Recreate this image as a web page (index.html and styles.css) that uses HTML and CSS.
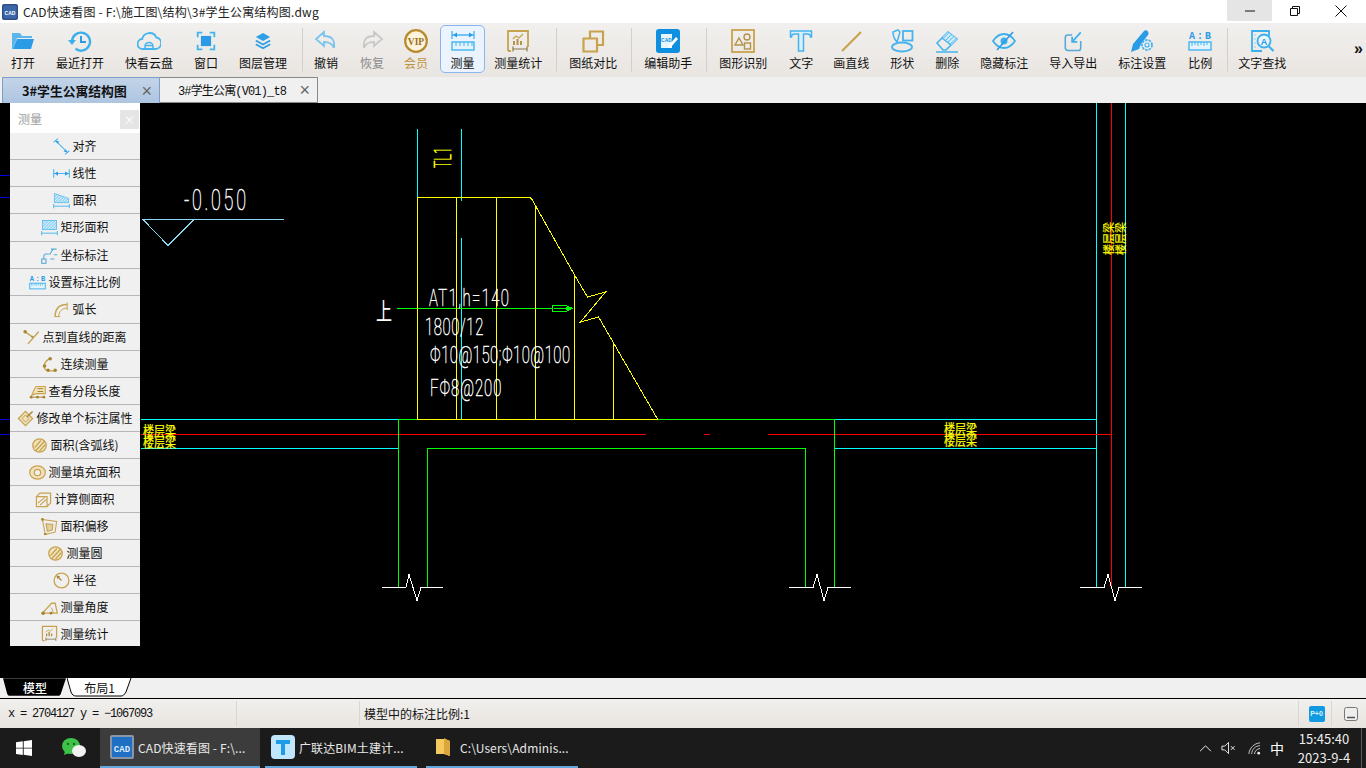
FILE: index.html
```html
<!DOCTYPE html>
<html lang="zh">
<head>
<meta charset="utf-8">
<title>CAD快速看图</title>
<link rel="stylesheet" href="styles.css">
</head>
<body>
<svg class="defs" aria-hidden="true">
  <defs>
    <pattern id="hatch-blue" width="3" height="3" patternUnits="userSpaceOnUse" patternTransform="rotate(45)">
      <rect width="3" height="3" fill="#d6effb"/><path d="M0 0v3" stroke="#45b4ee" stroke-width="1.600"/>
    </pattern>
  </defs>
  <symbol id="i-ruler" viewBox="0 0 24 24">
    <rect x="1" y="13" width="22" height="8" fill="#e4f4fd" stroke="#45b4ee" stroke-width="1.400"/>
    <path d="M4 13v4M7 13v3M10 13v4M13 13v3M16 13v4M19 13v3" stroke="#45b4ee" fill="none"/>
  </symbol>
  <symbol id="i-stat" viewBox="0 0 24 24">
    <path d="M2 22V2h20v16M2 22h3" fill="none" stroke="#c8a24e" stroke-width="1.800"/>
    <path d="M7 20h14M7 17.500v5M21 17.500v5" fill="none" stroke="#8a7a50" stroke-width="1.200"/>
    <path d="M7 10l3-3 3 2 4-4" fill="none" stroke="#c8a24e" stroke-width="1.300"/>
    <path d="M7 12h2v4H7zM10.500 10h2v6h-2zM14 12h2v4h-2z" fill="#b4924a"/>
  </symbol>
  <symbol id="i-hatch" viewBox="0 0 24 24">
    <circle cx="12" cy="12" r="9.500" fill="#f0e2bd" stroke="#c8a24e" stroke-width="1.800"/>
    <path d="M5 15l9-10M7 19l12-13M12 20l8-9" stroke="#c8a24e" stroke-width="1.800" fill="none"/>
  </symbol>
</svg>

<header class="titlebar">
  <svg class="app-mini" viewBox="0 0 16 16"><rect width="16" height="16" rx="2" fill="#2f4f86"/><rect x="1.500" y="1.500" width="13" height="13" fill="#3b66a8"/><text x="8" y="10.500" text-anchor="middle" class="mini-text">CAD</text></svg>
  <span class="title-text">CAD快速看图 - F:\施工图\结构\3#学生公寓结构图.dwg</span>
  <div class="winctl">
    <span class="winbtn is-hover"><svg viewBox="0 0 12 12"><path d="M1 6h10" stroke="#111"/></svg></span>
    <span class="winbtn"><svg viewBox="0 0 12 12"><path d="M1.500 3.500h7v7h-7zM3.500 3.500v-2h7v7h-2" fill="none" stroke="#111"/></svg></span>
    <span class="winbtn"><svg viewBox="0 0 12 12"><path d="M.5.500l11 11M11.500.500l-11 11" stroke="#111"/></svg></span>
  </div>
</header>

<nav class="toolbar">
  <div class="tool"><svg class="ico" viewBox="0 0 24 24"><path d="M1 4h8l2 3h10v2H6L2 20H1z" fill="#5cb6ee"/><path d="M6 10h17l-3 10H2z" fill="#2a9be6"/></svg><span>打开</span></div>
  <div class="tool"><svg class="ico" viewBox="0 0 24 24"><path d="M4 12.500A9 9 0 1 1 7.500 19.800" fill="none" stroke="#3cb0ee" stroke-width="2.400"/><path d="M0 11h8l-4 5z" fill="#3cb0ee"/><path d="M13 7v6h5" fill="none" stroke="#2a9be6" stroke-width="2"/></svg><span>最近打开</span></div>
  <div class="tool"><svg class="ico" viewBox="0 0 24 24"><path d="M6 20a5 5 0 0 1-.8-10 7.500 7.500 0 0 1 14.200-1.500 5.800 5.800 0 0 1-.8 11.500z" fill="none" stroke="#45b4ee" stroke-width="1.800"/><path d="M8 20v-3a4 3.500 0 0 1 8 0v3M8 16.500h8" fill="none" stroke="#45b4ee" stroke-width="1.500"/></svg><span>快看云盘</span></div>
  <div class="tool"><svg class="ico" viewBox="-1 -1 26 26"><path d="M3 8V3h5M16 3h5v5M21 16v5h-5M8 21H3v-5" fill="none" stroke="#45b4ee" stroke-width="2"/><rect x="6.500" y="6.500" width="11" height="11" fill="#2a9be6"/></svg><span>窗口</span></div>
  <div class="tool"><svg class="ico" viewBox="-3 -3 30 30"><path d="M12 2l9 5-9 5-9-5z" fill="#2f9fe6"/><path d="M3 11.500l9 5 9-5M3 16l9 5 9-5" fill="none" stroke="#2f9fe6" stroke-width="2.200"/></svg><span>图层管理</span></div>
  <i class="sep"></i>
  <div class="tool"><svg class="ico" viewBox="0 0 24 24"><path d="M10 3L2 10l8 7v-4c5 0 8 1 10 6 1-8-2-12-10-12z" fill="none" stroke="#7cc4ee" stroke-width="1.800"/></svg><span>撤销</span></div>
  <div class="tool tool-far"><svg class="ico" viewBox="0 0 24 24"><path d="M14 3l8 7-8 7v-4c-5 0-8 1-10 6-1-8 2-12 10-12z" fill="none" stroke="#c8c8c8" stroke-width="1.800"/></svg><span class="muted">恢复</span></div>
  <div class="tool"><svg class="ico" viewBox="0 0 24 24"><circle cx="12" cy="12" r="10.800" fill="#fbf3dc" stroke="#b98a2e" stroke-width="2.200"/><text x="12" y="15.500" text-anchor="middle" class="vip-text">VIP</text></svg><span class="gold">会员</span></div>
  <div class="tool is-active"><svg class="ico" viewBox="0 0 24 24"><path d="M1 2v8M23 2v8M1 6h22" fill="none" stroke="#45b4ee" stroke-width="1.300"/><path d="M2 6l4-2.500v5zM22 6l-4-2.500v5z" fill="#2a9be6"/><rect x="1" y="13" width="22" height="8" fill="#e4f4fd" stroke="#45b4ee" stroke-width="1.400"/><path d="M5 13v4M9 13v4M13 13v4M17 13v4M21 13v4" stroke="#45b4ee" fill="none"/></svg><span>测量</span></div>
  <div class="tool"><svg class="ico"><use href="#i-stat"/></svg><span>测量统计</span></div>
  <i class="sep sep-b"></i>
  <div class="tool"><svg class="ico" viewBox="0 0 24 24"><path d="M2.500 9.500h13.500v13H2.500zM9 9.500V2.500h13v13.500h-6" fill="none" stroke="#c8a24e" stroke-width="2.200"/></svg><span>图纸对比</span></div>
  <i class="sep sep-b"></i>
  <div class="tool"><svg class="ico" viewBox="0 0 24 24"><rect width="24" height="24" rx="3" fill="#0f8fe0"/><path d="M5 5h11v14H5z" fill="#e8f5fd"/><text x="10.500" y="13" text-anchor="middle" class="edit-text">CAD</text><path d="M13 16l7-8 2 2-7 8-3 1z" fill="#fff"/></svg><span>编辑助手</span></div>
  <i class="sep sep-b"></i>
  <div class="tool"><svg class="ico" viewBox="0 0 24 24"><rect x="1" y="1" width="22" height="22" fill="none" stroke="#c8a24e" stroke-width="1.800"/><path d="M4 16h8l-4-7z" fill="none" stroke="#b4924a" stroke-width="1.400"/><circle cx="16" cy="8" r="3" fill="none" stroke="#b4924a" stroke-width="1.400"/><rect x="13.500" y="14" width="6" height="6" fill="none" stroke="#b4924a" stroke-width="1.400"/></svg><span>图形识别</span></div>
  <div class="tool tool-far"><svg class="ico" viewBox="0 0 24 24"><path d="M1.500 2h21v6h-1c0-2-1-3-3-3h-4v17h-5V5H5.500C3.500 5 2.500 6 2.500 8h-1z" fill="#d9f0fc" stroke="#45b4ee" stroke-width="1.500"/></svg><span>文字</span></div>
  <div class="tool"><svg class="ico" viewBox="0 0 24 24"><path d="M3 22L22 3" fill="none" stroke="#c8a24e" stroke-width="2.200"/></svg><span>画直线</span></div>
  <div class="tool"><svg class="ico" viewBox="0 0 24 24"><ellipse cx="12" cy="18" rx="10" ry="4.500" fill="none" stroke="#45b4ee" stroke-width="1.800"/><rect x="13" y="2" width="9.500" height="9.500" fill="none" stroke="#45b4ee" stroke-width="1.800"/><path d="M3 3c0 4 1 7 4 10l3-10-2-2z" fill="none" stroke="#45b4ee" stroke-width="1.500"/></svg><span>形状</span></div>
  <div class="tool"><svg class="ico" viewBox="0 0 24 24"><path d="M2 14L13 3l9 7-11 11H8z" fill="none" stroke="#45b4ee" stroke-width="1.600"/><path d="M13 3l9 7-6 6-8-8z" fill="url(#hatch-blue)"/><path d="M7 9l9 7M1 23h22" fill="none" stroke="#45b4ee" stroke-width="1.500"/></svg><span>删除</span></div>
  <div class="tool"><svg class="ico" viewBox="0 0 24 24"><path d="M1 12C5 6 9 5 12 5s7 1 11 7c-4 6-8 7-11 7S5 18 1 12z" fill="none" stroke="#3cb0ee" stroke-width="1.800"/><circle cx="12" cy="12" r="3.500" fill="#3cb0ee"/><path d="M5 21L21 3" stroke="#2a9be6" stroke-width="1.500" fill="none"/></svg><span>隐藏标注</span></div>
  <div class="tool"><svg class="ico" viewBox="-2 -2 28 28"><path d="M11 5H6C4 5 3 6 3 8v12c0 2 1 3 3 3h13c1 0 2-1 2-3v-8" fill="none" stroke="#55a9d8" stroke-width="1.800"/><path d="M21 2L11 13M11 7v6h6" fill="none" stroke="#3cb0ee" stroke-width="2"/></svg><span>导入导出</span></div>
  <div class="tool"><svg class="ico" viewBox="0 0 24 24"><path d="M1 23l2-8L14 2c2-2 6 1 4 4L11 15l-2 5z" fill="#2a9be6"/><circle cx="17" cy="16" r="5" fill="#eee" stroke="#45b4ee" stroke-width="1.800" stroke-dasharray="2.500 1"/><circle cx="17" cy="16" r="2" fill="none" stroke="#45b4ee" stroke-width="1.200"/></svg><span>标注设置</span></div>
  <div class="tool tool-shift"><svg class="ico" viewBox="0 0 24 24"><text x="1" y="9.500" textLength="22" class="ab-text">A:B</text><use href="#i-ruler"/></svg><span>比例</span></div>
  <i class="sep sep-c"></i>
  <div class="tool"><svg class="ico" viewBox="0 0 24 24"><path d="M19 7V2H2v20h10" fill="none" stroke="#3cb0ee" stroke-width="1.800"/><path d="M4.500 6h1M4.500 10h1M4.500 14h1M4.500 18h1" stroke="#3cb0ee" fill="none"/><circle cx="14" cy="12" r="6.500" fill="#e9f6fd" stroke="#3cb0ee" stroke-width="1.800"/><text x="14" y="15.500" text-anchor="middle" class="find-text">A</text><path d="M18.500 17l5 5" stroke="#3cb0ee" stroke-width="2" fill="none"/></svg><span>文字查找</span></div>
  <b class="more">»</b>
</nav>

<div class="tabs">
  <div class="tab is-current"><b>3#学生公寓结构图</b><span class="x">×</span></div>
  <div class="tab is-other"><span class="mono">3#学生公寓(V01)_t8</span><span class="x">×</span></div>
</div>

<main class="canvas">
  <svg class="drawing" viewBox="0 103 1366 575" width="1366" height="575">
    <g class="lines" fill="none">
      <path stroke="#0000e0" d="M0 175.500h10M0 197.500h10M0 419.500h10M0 434.500h10"/>
      <path stroke="#00ffff" d="M417.500 129v68M461.500 129v72M461.500 238v181M141 419.500h257M141 448.500h257M834 419.500h262M834 448.500h262M1096.500 103v484M1125.500 103v484"/>
      <path stroke="#ff0000" d="M1111.500 103v484M141 434.500h505M640 434.500h6M704 434.500h6M768 434.500h343"/>
      <path stroke="#00ff00" d="M398 419.500h19M658 419.500h176M398.500 419v168M427.500 448v139M427 448.500h379M805.500 448v139M834.500 419v168M397 308.500h155"/>
      <path stroke="#00ff00" d="M552 305.500h14l6 3-6 3h-14zM554 308.500h18M566 307.500h6M566 309.500h4"/>
      <path stroke="#ffff00" d="M417 197.500h113l2 2 42.500 75.500 13 22 18-5-25 30 18-5 59 102H417.500V197.500M456.500 197v222M496.500 197v222M535.500 206v213M574.500 275v144M613.500 342v77"/>
      <path stroke="#88d8f0" d="M142 219.500h142M143 219.500l25 26 26-26"/>
      <path stroke="#ffffff" d="M382 587.500h24l3-13 8 26 4-13h22M789 587.500h24l4-13 7 26 4-13h23M1080 587.500h24l4-13 7 26 4-13h23"/>
    </g>
    <text class="shx" transform="translate(184 210) scale(.62 1)" textLength="100">-0.050</text>
    <text class="shx shx-s" transform="translate(429 306) scale(.62 1)" textLength="129">AT1,h=140</text>
    <text class="shx shx-s" transform="translate(425 335) scale(.62 1)" textLength="94">1800/12</text>
    <text class="shx shx-s" transform="translate(430 363) scale(.62 1)" textLength="226">Φ10@150;Φ10@100</text>
    <text class="shx shx-s" transform="translate(430 396) scale(.62 1)" textLength="115">FΦ8@200</text>
    <text class="shx-up" x="376" y="320" textLength="16" lengthAdjust="spacingAndGlyphs">上</text>
    <text class="shx-y" transform="translate(451 168) rotate(-90)" textLength="21" lengthAdjust="spacingAndGlyphs">TL1</text>
    <text class="beam" transform="translate(143 435.500) scale(1 1.200)">楼层梁</text>
    <text class="beam" transform="translate(143 447) scale(1 1.200)">楼层梁</text>
    <text class="beam" transform="translate(944 433.500) scale(1 1.200)">楼层梁</text>
    <text class="beam" transform="translate(944 445) scale(1 1.200)">楼层梁</text>
    <text class="beam" transform="translate(1113 255) rotate(-90)">楼层梁</text>
    <text class="beam" transform="translate(1125 255) rotate(-90)">楼层梁</text>
  </svg>

  <aside class="panel">
    <div class="panel-head"><span>测量</span><i class="panel-x">×</i></div>
    <div class="panel-rows">
      <div class="row"><svg class="pi" viewBox="0 0 24 24"><path d="M1 6l6-5M17 23l6-5M4 4l16 16" fill="none" stroke="#45b4ee" stroke-width="1.500"/><path d="M4 4l5 1-3 3zM20 20l-5-1 3-3z" fill="#2a9be6"/></svg><span>对齐</span></div>
      <div class="row"><svg class="pi" viewBox="0 0 24 24"><path d="M1 6v12M23 6v12M1 12h22" fill="none" stroke="#45b4ee" stroke-width="1.500"/><path d="M2 12l5-3v6zM22 12l-5-3v6z" fill="#2a9be6"/></svg><span>线性</span></div>
      <div class="row"><svg class="pi" viewBox="0 0 24 24"><path d="M2 2l20 7v6H2z" fill="url(#hatch-blue)" stroke="#45b4ee"/><path d="M1 17v6M23 17v6M1 20h22" fill="none" stroke="#45b4ee" stroke-width="1.300"/></svg><span>面积</span></div>
      <div class="row is-tall"><svg class="pi" viewBox="0 0 24 24"><rect x="2" y="2" width="20" height="13" fill="url(#hatch-blue)" stroke="#45b4ee"/><path d="M1 17v6M23 17v6M1 20h22" fill="none" stroke="#45b4ee" stroke-width="1.300"/></svg><span>矩形面积</span></div>
      <div class="row"><svg class="pi" viewBox="0 0 24 24"><rect x="1" y="17" width="6" height="6" fill="none" stroke="#55a9d8" stroke-width="1.500"/><path d="M4 17v-4c0-2 1-3 3-3h4M12 11l5-8M14 3h8M18 11h5M13 17h6" fill="none" stroke="#55a9d8" stroke-width="1.500"/></svg><span>坐标标注</span></div>
      <div class="row"><svg class="pi" viewBox="0 0 24 24"><text x="1" y="9.500" textLength="22" class="ab-text">A:B</text><use href="#i-ruler"/></svg><span>设置标注比例</span></div>
      <div class="row is-tall"><svg class="pi" viewBox="0 0 24 24"><path d="M3 22c0-11 6-17 17-17" fill="none" stroke="#c8a24e" stroke-width="2"/><path d="M8 22c0-7 5-12 12-12M20 2v11M2 22h8" fill="none" stroke="#c8a24e" stroke-width="1.400"/></svg><span>弧长</span></div>
      <div class="row"><svg class="pi" viewBox="0 0 24 24"><path d="M7 21L22 4M3 4l10 7" fill="none" stroke="#c8a24e" stroke-width="2"/><circle cx="3" cy="4" r="2.500" fill="#a9842f"/><circle cx="13" cy="11" r="1.500" fill="#a9842f"/></svg><span>点到直线的距离</span></div>
      <div class="row"><svg class="pi" viewBox="0 0 24 24"><path d="M13 3C5 8 3 14 6 19c1 2 5 2 14 2" fill="none" stroke="#c8a24e" stroke-width="1.800"/><circle cx="13" cy="4" r="2.500" fill="#a9842f"/><circle cx="5" cy="14" r="2.500" fill="#a9842f"/><circle cx="10" cy="20" r="2.500" fill="#a9842f"/><circle cx="20" cy="20" r="2.500" fill="#a9842f"/></svg><span>连续测量</span></div>
      <div class="row"><svg class="pi" viewBox="0 0 24 24"><path d="M10 5h13v10H10l-6 2 3-7z" fill="#f0e2bd" stroke="#c8a24e" stroke-width="1.500"/><path d="M12 8h8M12 12h8M3 20h18" fill="none" stroke="#a9842f" stroke-width="1.400"/><circle cx="3" cy="20" r="2" fill="#a9842f"/><circle cx="12" cy="20" r="2" fill="#a9842f"/><circle cx="21" cy="20" r="2" fill="#a9842f"/></svg><span>查看分段长度</span></div>
      <div class="row"><svg class="pi" viewBox="0 0 24 24"><path d="M2 12l10-10 10 10-10 10z" fill="#f0e2bd" stroke="#c8a24e" stroke-width="1.800"/><path d="M7 12l5-5 5 5-5 5z" fill="none" stroke="#a9842f"/><path d="M14 10l8-8" stroke="#a9842f" stroke-width="2" fill="none"/></svg><span>修改单个标注属性</span></div>
      <div class="row"><svg class="pi"><use href="#i-hatch"/></svg><span>面积(含弧线)</span></div>
      <div class="row"><svg class="pi" viewBox="0 0 24 24"><ellipse cx="12" cy="12" rx="11" ry="9.500" fill="#f0e2bd" stroke="#c8a24e" stroke-width="1.800"/><circle cx="12" cy="12" r="4.500" fill="#f0f0f0" stroke="#c8a24e" stroke-width="1.800"/></svg><span>测量填充面积</span></div>
      <div class="row"><svg class="pi" viewBox="0 0 24 24"><path d="M2 8h15v14H2zM2 8l5-5h15v14l-5 5" fill="none" stroke="#c8a24e" stroke-width="1.700"/><path d="M4 17l10-8M7 20l9-8" stroke="#c8a24e" stroke-width="1.500" fill="none"/></svg><span>计算侧面积</span></div>
      <div class="row"><svg class="pi" viewBox="0 0 24 24"><path d="M2 2l20 3-2 15-14 3z" fill="none" stroke="#c8a24e" stroke-width="1.500"/><path d="M7 8l10 1-1 8-7 2z" fill="#e4cf97" stroke="#a9842f"/><circle cx="2" cy="2" r="2" fill="#a9842f"/><circle cx="6" cy="23" r="2" fill="#a9842f"/></svg><span>面积偏移</span></div>
      <div class="row"><svg class="pi"><use href="#i-hatch"/></svg><span>测量圆</span></div>
      <div class="row"><svg class="pi" viewBox="0 0 24 24"><circle cx="12" cy="12" r="10.500" fill="none" stroke="#c8a24e" stroke-width="1.800"/><path d="M12 12L6 6" stroke="#a9842f" stroke-width="1.600" fill="none"/><path d="M5 5l5 1-4 4z" fill="#a9842f"/></svg><span>半径</span></div>
      <div class="row"><svg class="pi" viewBox="0 0 24 24"><path d="M2 20L15 6h5l3 14z" fill="none" stroke="#c8a24e" stroke-width="1.800"/><path d="M14 12c2 2 3 5 3 8" stroke="#a9842f" fill="none"/><circle cx="3" cy="20" r="2.500" fill="#a9842f"/><circle cx="14" cy="20" r="2" fill="#a9842f"/></svg><span>测量角度</span></div>
      <div class="row is-last"><svg class="pi"><use href="#i-stat"/></svg><span>测量统计</span></div>
    </div>
  </aside>
</main>

<div class="layouts">
  <div class="ltab is-model">
    <svg class="ltab-bg" viewBox="0 0 65 19"><path d="M0 0l4 15c1 3 2 3 4 3h47c2 0 3 0 4-3l5-15z" fill="#000"/></svg>
    <span>模型</span>
  </div>
  <div class="ltab is-layout">
    <svg class="ltab-bg" viewBox="0 0 65 19"><path d="M0 0l4 14c1 3 3 4 5 4h45c2 0 3-1 5-4l5-14" fill="#fff" stroke="#000"/></svg>
    <span>布局1</span>
  </div>
</div>

<footer class="status">
  <div class="cell cell-xy"><span class="coord">x = 2704127 y = −1067093</span></div>
  <div class="cell cell-gap"></div>
  <div class="cell cell-scale">模型中的标注比例:1</div>
  <div class="cell cell-badge"><span class="badge">P+0</span></div>
  <div class="cell cell-end"><svg class="minbox" viewBox="0 0 14 14"><rect x=".5" y=".5" width="13" height="13" rx="2" fill="#eee" stroke="#777"/><path d="M3 10.500h8" stroke="#555" stroke-width="1.500"/></svg></div>
</footer>

<div class="taskbar">
  <div class="start"><svg viewBox="0 0 16 16"><path d="M0 2.300l6.800-1v6.400H0zM7.700 1.200L16 0v7.700H7.700zM0 8.600h6.800V15L0 14zM7.700 8.600H16V16l-8.300-1.200z" fill="#fff"/></svg></div>
  <div class="pinned"><svg viewBox="0 0 24 20"><ellipse cx="9" cy="8" rx="9" ry="8" fill="#3fc24a"/><path d="M3 13l-1 4 5-2z" fill="#3fc24a"/><ellipse cx="17" cy="13" rx="7" ry="6" fill="#f2f2f2"/><circle cx="6" cy="6" r="1.200" fill="#1a6b22"/><circle cx="12" cy="6" r="1.200" fill="#1a6b22"/></svg></div>
  <div class="app is-run">
    <svg class="app-ico" viewBox="0 0 24 24"><rect width="24" height="24" rx="2" fill="#8a96a6"/><rect x="2" y="2" width="20" height="20" fill="#1f6fc4"/><text x="12" y="16.500" text-anchor="middle" class="task-cad">CAD</text></svg>
    <span>CAD快速看图 - F:\...</span>
  </div>
  <div class="app is-open is-second">
    <svg class="app-ico" viewBox="0 0 24 24"><rect width="24" height="24" rx="4" fill="#bfe6fb"/><path d="M5 5h14v4h-5v11h-4V9H5z" fill="#1c9be8"/></svg>
    <span>广联达BIM土建计...</span>
  </div>
  <div class="app is-open is-third">
    <svg class="folder-ico" viewBox="0 0 16 20"><path d="M1 2h8l6 2v15l-6-2H1z" fill="#f4c960"/><path d="M9 1l6 3v15l-6-2z" fill="#dba63a"/></svg>
    <span>C:\Users\Adminis...</span>
  </div>
  <div class="tray">
    <svg class="tray-ico" viewBox="0 0 14 10"><path d="M1 8l6-6 6 6" fill="none" stroke="#eee" stroke-width="1.100"/></svg>
    <svg class="tray-ico" viewBox="0 0 16 14"><path d="M1 5h3l4-4v12L4 9H1zM10.500 5l4 4M14.500 5l-4 4" fill="none" stroke="#eee"/></svg>
    <svg class="tray-ico" viewBox="0 0 14 14"><path d="M1 13C1 7 7 1 13 1M4 13c0-5 4-9 9-9M7 13c0-3 3-6 6-6" fill="none" stroke="#ccc"/><circle cx="11.500" cy="12" r="1.500" fill="#eee"/></svg>
    <span class="ime">中</span>
    <div class="clock"><span>15:45:40</span><span>2023-9-4</span></div>
  </div>
</div>
</body>
</html>
```

FILE: styles.css
```css
* { box-sizing: border-box; }
html, body { margin: 0; padding: 0; }
body {
  width: 1366px;
  height: 768px;
  overflow: hidden;
  display: flex;
  flex-direction: column;
  font-family: "Noto Sans CJK SC", "Liberation Sans", sans-serif;
  font-size: 12px;
  color: #111;
  background: #f0f0f0;
}
.defs { position: absolute; width: 0; height: 0; }

.titlebar { height: 23px; flex: none; display: flex; align-items: center; background: #fff; padding-left: 2px; }
.app-mini { width: 16px; height: 16px; margin-right: 5px; flex: none; }
.mini-text { font: 700 5px "Liberation Sans", sans-serif; fill: #fff; }
.title-text { font-size: 12px; letter-spacing: .2px; line-height: 23px; color: #222; }
.winctl { margin-left: auto; display: flex; align-self: flex-start; padding-right: 2px; }
.winbtn { width: 46px; height: 21px; display: flex; align-items: center; justify-content: center; }
.winbtn svg { width: 12px; height: 12px; }
.winbtn.is-hover { width: 45px; background: #e5e5e5; }

.toolbar {
  height: 54px;
  flex: none;
  display: flex;
  align-items: flex-start;
  gap: 1px;
  padding: 2px 0 0 1px;
  background: linear-gradient(#f1f0ee, #e9e5e1);
}
.tool {
  height: 48px;
  padding: 3px 9px 0;
  border: 1px solid transparent;
  border-radius: 5px;
  display: flex;
  flex-direction: column;
  align-items: center;
  flex: none;
}
.tool span { display: block; line-height: 16px; margin-top: 2px; white-space: nowrap; }
.tool .muted { color: #8a8a8a; }
.tool .gold { color: #bd9440; }
.tool-far { margin-left: 1px; margin-right: -1px; }
.tool-shift { margin-left: 1px; }
.tool.is-active { width: 45px; padding: 3px 0 0; margin: 0 -2px 0 1px; border-color: #8ab6ee; background: #eaf3fe; }
.ico { width: 24px; height: 24px; display: block; }
.sep { width: 1px; height: 44px; margin: 3px 0 0 4px; background: #d2d0cd; flex: none; }
.sep-b { margin-left: 3px; margin-right: 1px; }
.sep-c { margin-right: -1px; }
.more { margin-left: auto; margin-right: 3px; font: 700 16px/48px "Liberation Sans", sans-serif; color: #111; }
.ab-text { font: 700 10px "Liberation Mono", monospace; fill: #2a9be6; }
.vip-text { font: 700 9.500px "Liberation Serif", serif; fill: #9a6f1c; }
.edit-text { font: 700 5px "Liberation Sans", sans-serif; fill: #0f8fe0; }
.find-text { font: 700 9px "Liberation Sans", sans-serif; fill: #2a9be6; }

.tabs { height: 26px; flex: none; display: flex; padding-left: 2px; background: #f0f0f0; }
.tab { width: 158px; height: 26px; display: flex; align-items: center; justify-content: space-between; padding: 0 7px 0 19px; }
.tab.is-current { background: linear-gradient(#c3d4e9, #aec5e0); border: 1px solid #7d9ecb; border-bottom: 0; }
.tab.is-current b { font-size: 12.800px; font-weight: 700; white-space: nowrap; }
.tab.is-other { border: 1px solid #8a8a8a; border-left: 0; padding-left: 18px; }
.mono { font-family: "Liberation Mono", "Noto Sans CJK SC", monospace; font-size: 12px; letter-spacing: -.85px; white-space: nowrap; }
.x { color: #666; font: 18px/18px "Liberation Sans", sans-serif; }

.canvas { height: 575px; flex: none; position: relative; background: #000; overflow: hidden; }
.drawing { display: block; }
.lines { shape-rendering: crispEdges; stroke-width: 1; }
.shx { font-family: Roboto, "Liberation Sans", sans-serif; font-weight: 100; font-size: 29px; fill: #fff; stroke: #fff; stroke-width: .5; }
.shx-s { font-size: 24px; }
.shx-up { font-family: "Noto Sans CJK SC", sans-serif; font-size: 24px; fill: #fff; }
.shx-y { font-family: Roboto, "Liberation Sans", sans-serif; font-weight: 100; font-size: 24px; fill: #ff0; stroke: #ff0; stroke-width: .6; }
.beam { font-family: "Noto Sans CJK SC", sans-serif; font-size: 11px; fill: #ff0; stroke: #ff0; stroke-width: .2; }

.panel { position: absolute; left: 10px; top: 0; width: 130px; height: 543px; background: #f0f0f0; display: flex; flex-direction: column; }
.panel-head { height: 30px; flex: none; background: #fff; display: flex; align-items: center; justify-content: space-between; padding: 0 1px 0 8px; color: #a0a0a0; }
.panel-x { width: 19px; height: 19px; align-self: flex-start; margin-top: 7px; background: #e5e5e5; color: #fff; font-style: normal; text-align: center; line-height: 19px; font-size: 12px; }
.panel-rows { flex: 1; display: flex; flex-direction: column; }
.row { height: 27px; flex: none; display: flex; align-items: center; justify-content: center; gap: 2px; border-bottom: 1px solid #b6b6b6; white-space: nowrap; color: #111; }
.row span { margin-bottom: 2px; }
.row.is-tall { height: 28px; }
.row.is-last { height: 25px; border-bottom: 0; }
.row.is-last span { margin-bottom: 0; }
.pi { width: 17px; height: 17px; flex: none; }

.layouts { height: 21px; flex: none; display: flex; background: #f0f0f0; border-bottom: 1px solid #000; padding-left: 3px; }
.ltab { width: 64px; height: 19px; position: relative; display: flex; align-items: center; justify-content: center; }
.ltab span { position: relative; line-height: 17px; margin-top: -1px; }
.ltab-bg { position: absolute; inset: 0; width: 100%; height: 100%; }
.is-model span { color: #fff; font-weight: 500; }
.is-layout { width: 65px; }

.status { height: 29px; flex: none; display: flex; align-items: center; background: linear-gradient(#f1f0ee, #e8e4df); }
.cell { height: 25px; display: flex; align-items: center; border-right: 1px solid #d8d6d2; flex: none; }
.cell-xy { width: 237px; padding-left: 8px; }
.coord { font-family: "Liberation Mono", monospace; font-size: 12px; letter-spacing: -1.200px; white-space: nowrap; }
.cell-gap { width: 123px; }
.cell-scale { width: 939px; padding-left: 4px; }
.cell-badge { width: 33px; justify-content: center; padding-left: 3px; }
.badge { width: 16px; height: 16px; border-radius: 2px; background: #0f9ae2; color: #dff2fd; font: 700 7px/16px "Liberation Sans", sans-serif; text-align: center; }
.cell-end { flex: 1; border-right: 0; justify-content: center; padding-left: 4px; }
.minbox { width: 14px; height: 14px; }

.taskbar { height: 40px; flex: none; display: flex; align-items: stretch; background: #1b1b1b; color: #eee; }
.start { width: 47px; display: flex; align-items: center; justify-content: center; }
.start svg { width: 16px; height: 16px; }
.pinned { width: 53px; display: flex; align-items: center; justify-content: center; }
.pinned svg { width: 24px; height: 20px; }
.app { display: flex; align-items: center; white-space: nowrap; border-bottom: 2px solid #62a8de; color: #e8e8e8; letter-spacing: .12px; }
.app.is-run { width: 160px; padding-left: 10px; gap: 4px; background: #3c3c3c; }
.app.is-open { width: 152px; }
.is-second { margin-left: 5px; padding-left: 6px; gap: 4px; }
.is-third { margin-left: 9px; padding-left: 9px; gap: 9px; }
.app-ico { width: 24px; height: 24px; flex: none; }
.task-cad { font: 700 9px "Liberation Mono", monospace; fill: #dcebf8; }
.folder-ico { width: 16px; height: 20px; flex: none; }
.tray { margin-left: auto; display: flex; align-items: center; padding-right: 9px; border-right: 1px solid #5a5a5a; margin-right: 4px; }
.tray-ico { flex: none; }
.tray-ico:nth-child(1) { width: 13px; height: 9px; margin-right: 9px; }
.tray-ico:nth-child(2) { width: 15px; height: 14px; margin-right: 12px; }
.tray-ico:nth-child(3) { width: 13px; height: 13px; margin-right: 9px; }
.ime { font-size: 14px; margin-right: 12px; color: #fff; }
.clock { display: flex; flex-direction: column; align-items: center; width: 56px; font-size: 13px; line-height: 19px; margin-top: -1px; }
```
